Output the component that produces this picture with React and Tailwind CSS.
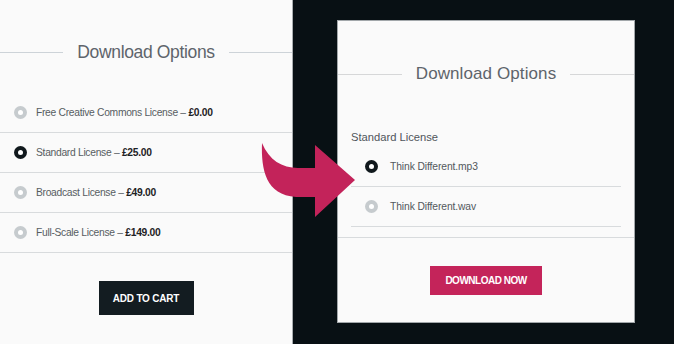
const licenses = [
  { name: 'Free Creative Commons License', price: '£0.00', selected: false },
  { name: 'Standard License', price: '£25.00', selected: true },
  { name: 'Broadcast License', price: '£49.00', selected: false },
  { name: 'Full-Scale License', price: '£149.00', selected: false },
];

const files = [
  { name: 'Think Different.mp3', selected: true },
  { name: 'Think Different.wav', selected: false },
];

function Radio({ selected }) {
  return (
    <span
      className={`flex h-[13px] w-[13px] shrink-0 items-center justify-center rounded-full ${
        selected ? 'bg-[#10181c]' : 'bg-[#c6cbce]'
      }`}
    >
      <span className="h-[5px] w-[5px] rounded-full bg-white" />
    </span>
  );
}

function Heading({ lineColor, size }) {
  return (
    <div className="flex items-center gap-[14px]">
      <div className={`h-px flex-1 ${lineColor}`} />
      <h2 className={`leading-[20px] text-[#5e646b] ${size}`}>Download Options</h2>
      <div className={`h-px flex-1 ${lineColor}`} />
    </div>
  );
}

function ArrowMark() {
  return (
    <svg
      className="pointer-events-none absolute left-[255px] top-[135px]"
      width="105"
      height="90"
      viewBox="255 135 105 90"
    >
      <path
        d="M262,143 C261,170 266,195 296,197 L315,197 L315,217 L355,180 L315,145 L315,168 L298,168 C282,168 269,160 262,143 Z"
        fill="#c3235a"
      />
    </svg>
  );
}

export default function App() {
  return (
    <div
      className="relative flex h-[344px] w-[674px] overflow-hidden bg-[#081014]"
      style={{ fontFamily: '"Liberation Sans", Arial, sans-serif' }}
    >
      <div className="flex h-full w-[293px] flex-col border-r border-[#a9adb0] bg-[#fafafa] pt-[42px]">
        <Heading lineColor="bg-[#cdd3d8]" size="text-[17.5px] tracking-[-0.35px]" />

        <div className="mt-[31px]">
          {licenses.map((item) => (
            <div
              key={item.name}
              className="flex h-[40px] items-center gap-[9px] border-b border-[#d8dbdd] pl-[14px]"
            >
              <Radio selected={item.selected} />
              <span className="text-[10.3px] tracking-[-0.3px] text-[#575d62]">
                {item.name} – <b className="font-bold text-[#1e2225]">{item.price}</b>
              </span>
            </div>
          ))}
        </div>

        <div className="mt-[28px] flex justify-center">
          <button className="h-[34px] w-[95px] bg-[#131c21] text-[10px] font-bold tracking-[-0.2px] text-white">
            ADD TO CART
          </button>
        </div>
      </div>

      <div className="flex-1 pl-[44px] pt-[20px]">
        <div className="flex h-[303px] w-[298px] flex-col border border-[#a2a7aa] bg-[#fafafa] pt-[43px]">
          <Heading lineColor="bg-[#d6d7d8]" size="text-[17px] tracking-[0.1px]" />

          <div className="mt-[46px] px-[13px]">
            <p className="text-[11.2px] leading-[14px] text-[#4f555a]">Standard License</p>
            <div className="mt-[3px]">
              {files.map((f) => (
                <div
                  key={f.name}
                  className="flex h-[40px] items-center gap-[12px] border-b border-[#d8dbdd] pl-[14px]"
                >
                  <Radio selected={f.selected} />
                  <span className="text-[10.3px] tracking-[-0.1px] text-[#52585d]">{f.name}</span>
                </div>
              ))}
            </div>
          </div>

          <div className="mt-[10px] border-t border-[#d8dbdd] pt-[28px]">
            <div className="flex justify-center">
              <button className="h-[29px] w-[112px] bg-[#c4245a] text-[10px] font-bold tracking-[-0.5px] text-white">
                DOWNLOAD NOW
              </button>
            </div>
          </div>
        </div>
      </div>

      <ArrowMark />
    </div>
  );
}
